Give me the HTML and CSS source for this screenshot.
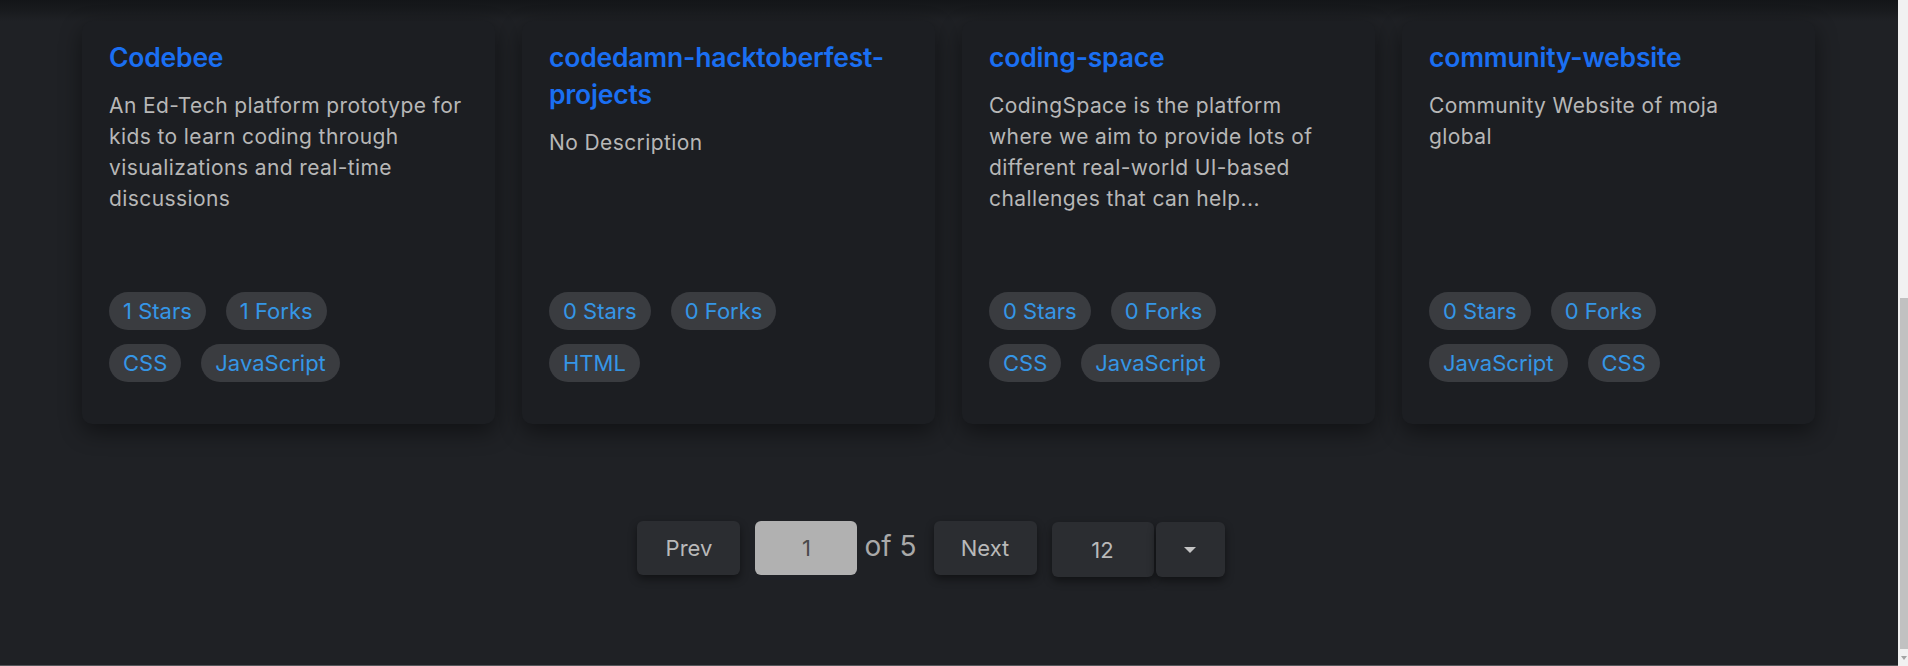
FILE: index.html
```html
<!DOCTYPE html>
<html lang="en">
<head>
<meta charset="utf-8">
<title>Repositories</title>
<link rel="stylesheet" href="styles.css">
</head>
<body>
<div class="window">
  <main class="page">
    <div class="top-fade"></div>
    <section class="grid">
      <article class="card">
        <h2 class="card-title">Codebee</h2>
        <p class="card-desc">An Ed-Tech platform prototype for<br>kids to learn coding through<br>visualizations and real-time<br>discussions</p>
        <div class="chips">
          <div class="chip-row"><span class="chip">1 Stars</span><span class="chip">1 Forks</span></div>
          <div class="chip-row"><span class="chip">CSS</span><span class="chip">JavaScript</span></div>
        </div>
      </article>
      <article class="card">
        <h2 class="card-title">codedamn-hacktoberfest-projects</h2>
        <p class="card-desc">No Description</p>
        <div class="chips">
          <div class="chip-row"><span class="chip">0 Stars</span><span class="chip">0 Forks</span></div>
          <div class="chip-row"><span class="chip">HTML</span></div>
        </div>
      </article>
      <article class="card">
        <h2 class="card-title">coding-space</h2>
        <p class="card-desc">CodingSpace is the platform<br>where we aim to provide lots of<br>different real-world UI-based<br>challenges that can help...</p>
        <div class="chips">
          <div class="chip-row"><span class="chip">0 Stars</span><span class="chip">0 Forks</span></div>
          <div class="chip-row"><span class="chip">CSS</span><span class="chip">JavaScript</span></div>
        </div>
      </article>
      <article class="card">
        <h2 class="card-title">community-website</h2>
        <p class="card-desc">Community Website of moja<br>global</p>
        <div class="chips">
          <div class="chip-row"><span class="chip">0 Stars</span><span class="chip">0 Forks</span></div>
          <div class="chip-row"><span class="chip">JavaScript</span><span class="chip">CSS</span></div>
        </div>
      </article>
    </section>

    <nav class="pager">
      <button class="btn">Prev</button>
      <div class="page-input">1</div>
      <span class="of">of 5</span>
      <button class="btn">Next</button>
      <div class="select">
        <div class="select-value">12</div>
        <div class="select-caret"><span class="caret"></span></div>
      </div>
    </nav>
  </main>
  <aside class="scrollbar">
    <div class="thumb"></div>
    <div class="arrow"><span class="arrow-tri"></span></div>
  </aside>
</div>
</body>
</html>
```

FILE: styles.css
```css
html, body {
  margin: 0;
  padding: 0;
  background: #1f2125;
}

body {
  font-family: Inter, "Open Sans", "Liberation Sans", sans-serif;
}

.window {
  display: flex;
  height: 100vh;
  overflow: hidden;
}

.page {
  flex: 1;
  min-width: 0;
  display: flex;
  flex-direction: column;
  background: #1f2125;
  border-bottom: 1px solid #55575b;
  box-sizing: border-box;
}

.top-fade {
  height: 21px;
  flex: none;
  background: linear-gradient(to bottom, #131518 0%, #181a1d 45%, #1f2125 100%);
}

.grid {
  display: grid;
  grid-template-columns: repeat(4, 413px);
  column-gap: 27px;
  padding-left: 82px;
}

.card {
  height: 403px;
  box-sizing: border-box;
  padding: 18px 27px 42px 27px;
  background: #1c1e22;
  border-radius: 10px;
  box-shadow: 0 8px 22px rgba(0, 0, 0, 0.45);
  display: flex;
  flex-direction: column;
}

.card-title {
  margin: 0;
  font-size: 26.5px;
  line-height: 37px;
  font-weight: 600;
  color: #1a6ff2;
  letter-spacing: -0.2px;
}

.card-desc {
  margin: 14px 0 0 0;
  font-size: 21px;
  line-height: 31px;
  letter-spacing: 0.4px;
  color: #b7b7b7;
  white-space: nowrap;
}

.chips {
  margin-top: auto;
  display: flex;
  flex-direction: column;
  gap: 14px;
}

.chip-row {
  display: flex;
  gap: 20px;
}

.chip {
  height: 38px;
  line-height: 38px;
  padding: 0 14px;
  border-radius: 19px;
  background: #3a3c40;
  color: #3596e6;
  font-size: 22px;
}

.pager {
  margin-top: 95px;
  display: flex;
  align-items: center;
  justify-content: center;
  padding-right: 36px;
}

.btn {
  width: 103px;
  height: 54px;
  border: none;
  border-radius: 6px;
  background: #2b2d31;
  color: #b9b9b9;
  font-family: inherit;
  font-size: 22px;
  box-shadow: 0 4px 8px rgba(0, 0, 0, 0.45);
  padding: 0;
}

.page-input {
  width: 102px;
  height: 54px;
  margin-left: 15px;
  border-radius: 6px;
  background: #b1b1b1;
  color: #4a4a4a;
  font-size: 22px;
  display: flex;
  align-items: center;
  justify-content: center;
}

.of {
  margin: 0 17px 0 7px;
  color: #a9a9a9;
  font-size: 28px;
  padding-bottom: 4px;
}

.select {
  display: flex;
  gap: 2px;
  margin-left: 15px;
  margin-top: 3px;
}

.select-value {
  width: 102px;
  height: 55px;
  border-radius: 6px;
  background: #2b2d31;
  color: #b9b9b9;
  font-size: 22px;
  display: flex;
  align-items: center;
  justify-content: center;
  box-shadow: 0 4px 8px rgba(0, 0, 0, 0.45);
}

.select-caret {
  width: 69px;
  height: 55px;
  border-radius: 6px;
  background: #2b2d31;
  display: flex;
  align-items: center;
  justify-content: center;
  box-shadow: 0 4px 8px rgba(0, 0, 0, 0.45);
}

.caret {
  width: 0;
  height: 0;
  border-left: 6px solid transparent;
  border-right: 6px solid transparent;
  border-top: 6px solid #c4c4c4;
}

.scrollbar {
  flex: none;
  width: 10px;
  background: #f1f1f1;
  display: flex;
  flex-direction: column;
  padding-top: 298px;
  box-sizing: border-box;
}

.thumb {
  height: 351px;
  margin-left: 2px;
  background: #c1c1c1;
}

.arrow {
  flex: 1;
  display: flex;
  align-items: center;
  justify-content: center;
  padding-left: 2px;
}

.arrow-tri {
  width: 0;
  height: 0;
  border-left: 3px solid transparent;
  border-right: 3px solid transparent;
  border-top: 4px solid #a3a3a3;
}
```
